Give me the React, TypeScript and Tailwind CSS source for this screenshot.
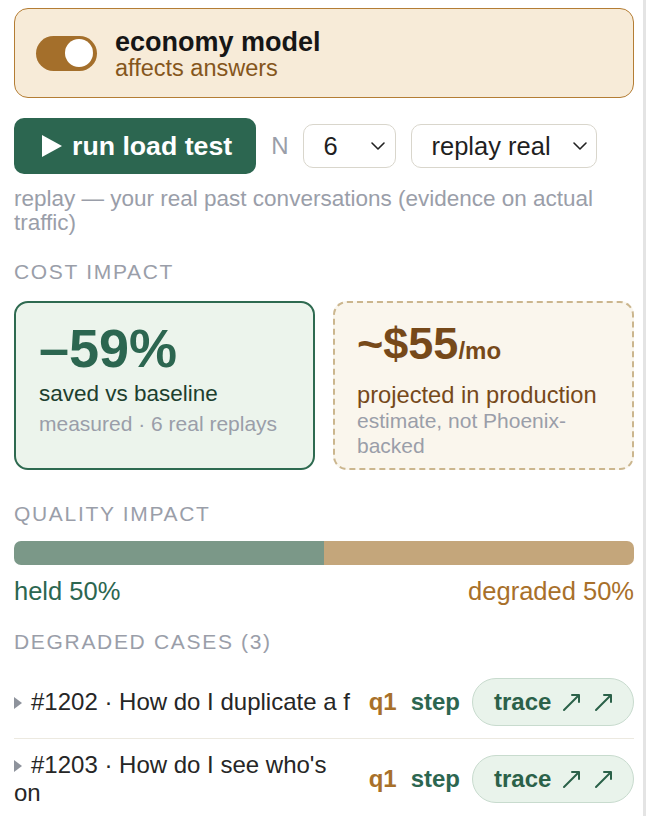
import { useState } from 'react'

type Case = { id: number; question: string }

const cases: Case[] = [
  { id: 1202, question: 'How do I duplicate a f' },
  { id: 1203, question: "How do I see who's on" },
]

function Chevron() {
  return (
    <svg width="16" height="10" viewBox="0 0 16 10" fill="none" className="shrink-0">
      <polyline points="2,2 8,8 14,2" stroke="#222" strokeWidth="1.6" strokeLinecap="round" strokeLinejoin="round" />
    </svg>
  )
}

function ArrowNE() {
  return (
    <svg width="22" height="22" viewBox="0 0 22 22" fill="none" className="shrink-0">
      <path d="M3 19 L18 4 M11 4 H18 V11" stroke="#2b6149" strokeWidth="2" strokeLinecap="round" strokeLinejoin="round" />
    </svg>
  )
}

function Caret() {
  return (
    <svg width="8" height="12" viewBox="0 0 8 12" className="mr-[9px] inline-block align-[1px]">
      <polygon points="0,0 8,6 0,12" fill="#8e939c" />
    </svg>
  )
}

function Label({ children }: { children: React.ReactNode }) {
  return (
    <div className="text-[21px] leading-[24px] tracking-[0.08em] uppercase text-[#9a9ea9]">
      {children}
    </div>
  )
}

export default function App() {
  const [economy, setEconomy] = useState(true)

  return (
    <div
      className="w-[646px] border-r-[3px] border-[#e4e4e4] bg-white pt-2 pr-[9px] pl-[14px] text-[#1f1f1f]"
      style={{ fontFamily: '"Liberation Sans", Arial, sans-serif' }}
    >
      {/* model switch */}
      <div className="flex h-[90px] items-center gap-[18px] rounded-[14px] border border-[#b47d34] bg-[#f7ebd8] px-[21px]">
        <button
          type="button"
          onClick={() => setEconomy(!economy)}
          className={`flex h-[35px] w-[61px] shrink-0 items-center rounded-full px-[4px] ${
            economy ? 'justify-end bg-[#a46f2b]' : 'justify-start bg-[#cbb89a]'
          }`}
        >
          <span className="h-[28px] w-[28px] rounded-full bg-white" />
        </button>
        <div className="flex flex-col pt-1">
          <span className="text-[27px] leading-[26px] font-bold text-[#161616]">economy model</span>
          <span className="text-[23.5px] leading-[26px] text-[#85561c]">affects answers</span>
        </div>
      </div>

      {/* load test controls */}
      <div className="mt-5 flex items-center gap-[15px]">
        <button
          type="button"
          className="flex h-[56px] items-center gap-[10px] rounded-[10px] bg-[#2c6650] pr-6 pl-7 text-[26.7px] font-bold text-white"
        >
          <svg width="20" height="22" viewBox="0 0 20 22">
            <polygon points="0,0 20,11 0,22" fill="white" />
          </svg>
          run load test
        </button>
        <span className="text-[24px] text-[#9a9ea9]">N</span>
        <div className="flex h-[44px] w-[93px] items-center justify-between rounded-[10px] border border-[#d9d6cc] pr-[9px] pl-[19px] text-[25.5px]">
          6
          <Chevron />
        </div>
        <div className="flex h-[44px] w-[186px] items-center justify-between rounded-[10px] border border-[#d9d6cc] pr-[8px] pl-[19px] text-[25.5px]">
          replay real
          <Chevron />
        </div>
      </div>

      <p className="mt-[13px] text-[22.5px] leading-[24px] text-[#9a9ea9]">
        replay — your real past conversations (evidence on actual traffic)
      </p>

      <div className="mt-[25px]">
        <Label>Cost impact</Label>
      </div>

      <div className="mt-[17px] grid h-[169px] grid-cols-2 gap-[18px]">
        <div className="rounded-[14px] border-2 border-[#2e6a50] bg-[#ecf4ec] px-[23px] pt-[18px]">
          <div className="text-[54px] leading-[54px] font-bold text-[#2c6650]">–59%</div>
          <div className="mt-[6px] text-[22.5px] leading-[26px] text-[#1d3f2f]">saved vs baseline</div>
          <div className="mt-1 text-[21px] leading-[25px] text-[#9a9ea9]">measured · 6 real replays</div>
        </div>
        <div className="rounded-[14px] border-2 border-dashed border-[#cbb68e] bg-[#faf6ed] px-[22px] pt-[18px]">
          <div className="text-[45px] leading-[45px] font-bold text-[#76491a]">
            ~$55<span className="text-[24px]">/mo</span>
          </div>
          <div className="mt-[9px] text-[23.7px] leading-[26px] text-[#76491a]">projected in production</div>
          <div className="text-[21px] leading-[25px] text-[#9a9ea9]">estimate, not Phoenix-backed</div>
        </div>
      </div>

      <div className="mt-8">
        <Label>Quality impact</Label>
      </div>

      <div className="mt-[15px] flex h-[24px] overflow-hidden rounded-[7px]">
        <div className="w-1/2 bg-[#7b9888]" />
        <div className="w-1/2 bg-[#c4a67b]" />
      </div>
      <div className="mt-[14px] flex justify-between text-[25.5px] leading-[24px]">
        <span className="text-[#2c6650]">held 50%</span>
        <span className="text-[#a8702a]">degraded 50%</span>
      </div>

      <div className="mt-[27px]">
        <Label>Degraded cases (3)</Label>
      </div>

      <ul className="mt-3">
        {cases.map((c, i) => (
          <li
            key={c.id}
            className={`flex items-center gap-3 py-3 ${i > 0 ? 'border-t border-[#ece9e0]' : ''}`}
          >
            <div className="min-w-0 flex-1 text-[24px] leading-[28px] text-[#262626]">
              <Caret />
              {`#${c.id} · ${c.question}`}
            </div>
            <span className="text-[24px] font-bold text-[#a8702a]">q1</span>
            <span className="ml-[2px] text-[24px] font-bold text-[#2c6650]">step</span>
            <button
              type="button"
              className="flex h-[48px] w-[162px] shrink-0 items-center gap-[10px] rounded-full border border-[#c8dbce] bg-[#e9f3eb] pl-[21px] text-[24px] font-bold text-[#2b6149]"
            >
              trace
              <ArrowNE />
              <ArrowNE />
            </button>
          </li>
        ))}
      </ul>
    </div>
  )
}
